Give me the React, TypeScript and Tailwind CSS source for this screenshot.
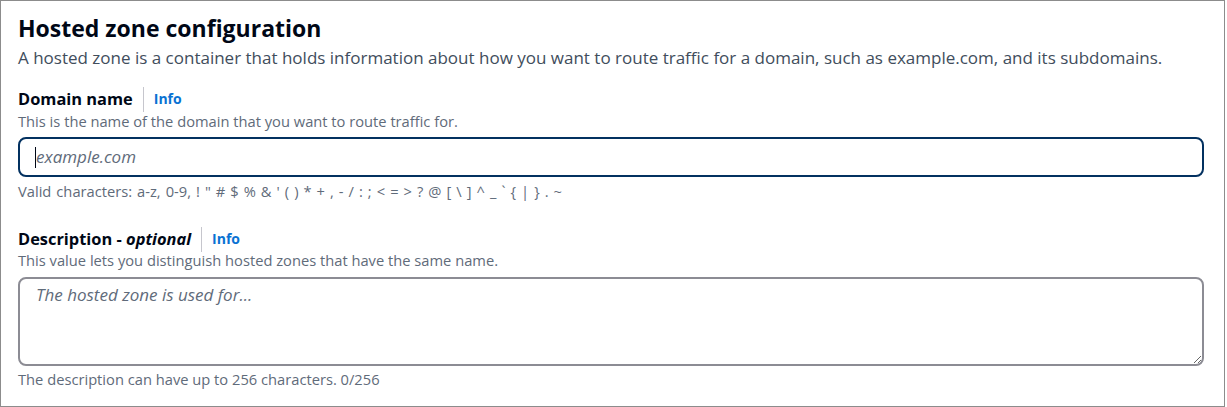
import React from "react";

const FONT = "font-['Open_Sans',_'Liberation_Sans',_sans-serif]";

function Label({ title, optional }: { title: string; optional?: boolean }) {
  return (
    <div className="flex items-center h-[22px]">
      <span className="text-[16.4px] font-bold text-[#000716] leading-[22px]">
        {title}
        {optional && (
          <>
            {" - "}
            <i className="font-bold">optional</i>
          </>
        )}
      </span>
      <span className="mx-[10px] h-[25px] w-px bg-[#c6c6cd]" />
      <a className="text-[14px] font-bold text-[#0972d3] leading-[22px]">Info</a>
    </div>
  );
}

export default function App() {
  return (
    <div className={`${FONT} bg-white w-[1225px] h-[407px] border border-[#8c8c8c] px-[17px] pt-[12px]`}>
      <h2 className="text-[23px] font-bold leading-[30px] text-[#000716]">Hosted zone configuration</h2>
      <p className="text-[17px] leading-[22px] text-[#414d5c] mt-[4px]">
        A hosted zone is a container that holds information about how you want to route traffic for a domain, such as
        example.com, and its subdomains.
      </p>

      {/* Domain name */}
      <div className="mt-[19px]">
        <Label title="Domain name" />
        <p className="text-[14.7px] leading-[20px] text-[#5f6b7a] mt-px">
          This is the name of the domain that you want to route traffic for.
        </p>
        <div className="mt-[6px] w-[1186px] h-[40px] rounded-[8px] border-2 border-[#033160] flex items-center pl-[15px]">
          <span className="w-px h-[21px] bg-[#000716]" />
          <span className="text-[17px] leading-[22px] italic text-[#5f6b7a]">example.com</span>
        </div>
        <p className="text-[14.7px] leading-[20px] text-[#5f6b7a] mt-[4px] [word-spacing:1.2px]">
          Valid characters: a-z, 0-9, ! " # $ % &amp; ' ( ) * + , - / : ; &lt; = &gt; ? @ [ \ ] ^ _ ` {"{"} | {"}"} . ~
        </p>
      </div>

      {/* Description */}
      <div className="mt-[27px]">
        <Label title="Description" optional />
        <p className="text-[14.7px] leading-[20px] text-[#5f6b7a]">
          This value lets you distinguish hosted zones that have the same name.
        </p>
        <textarea
          className="block mt-[7px] w-[1186px] h-[89px] rounded-[8px] border-2 border-[#8c8c94] pl-[16px] pt-[5px] text-[17px] leading-[22px] italic placeholder:text-[#5f6b7a] outline-none resize-y"
          placeholder="The hosted zone is used for..."
        />
        <p className="text-[14.7px] leading-[20px] text-[#5f6b7a] mt-[3px]">
          The description can have up to 256 characters. 0/256
        </p>
      </div>
    </div>
  );
}
